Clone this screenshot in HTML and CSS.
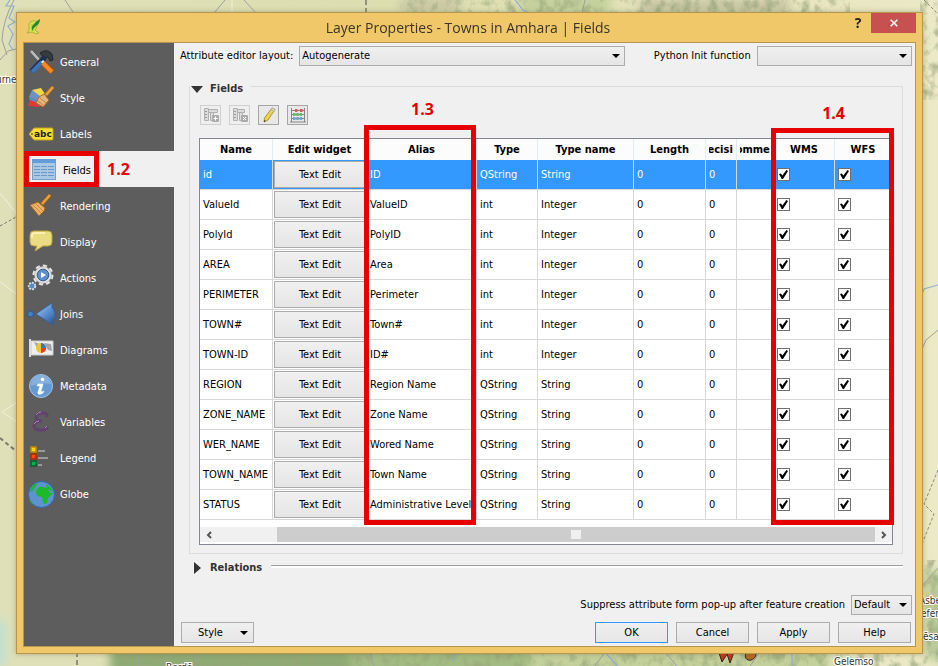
FILE: index.html
```html
<!DOCTYPE html>
<html lang="en">
<head>
<meta charset="utf-8">
<title>Layer Properties - Towns in Amhara | Fields</title>
<link rel="stylesheet" href="styles.css">
</head>
<body>
<svg class="map" viewBox="0 0 938 666" preserveAspectRatio="none" aria-hidden="true">
  <defs>
    <linearGradient id="land" x1="0" x2="1"><stop offset="0" stop-color="#dfe0b8"/><stop offset=".45" stop-color="#dcdeb0"/><stop offset="1" stop-color="#ebe9c6"/></linearGradient>
    <filter id="soft" x="-20%" y="-80%" width="140%" height="260%"><feGaussianBlur stdDeviation="5"/></filter>
    <filter id="relief" x="0" y="0" width="100%" height="100%"><feTurbulence type="fractalNoise" baseFrequency=".11 .08" numOctaves="4" seed="8"/><feColorMatrix values="0 0 0 0 .32  0 0 0 0 .38  0 0 0 0 .2  3 0 0 0 -1.35"/></filter>
    <clipPath id="hills"><path d="M400 0H850V13H400zM120 652H938V666H120zM920 0H938V100H920zM920 560H938V666H920z"/></clipPath>
  </defs>
  <rect width="938" height="666" fill="url(#land)"/>
  <g filter="url(#soft)">
    <path fill="#8faa74" d="M110 646h240v30H110zM380 646h90v30h-90z"/>
    <path fill="#a3bb83" d="M350 646h210v30H350z"/>
    <path fill="#c3d09b" d="M530 646h300v30H530zM520 -5h90v18h-90z"/>
    <path fill="#c4c2a0" d="M400 0h60v10h-60zM640 0h150v12H640z"/>
    <path fill="#b9cb98" d="M925 570h20v90h-20z"/>
    <path fill="#bfe0d0" d="M-8 620h14v46h-14z"/>
  </g>
  <g clip-path="url(#hills)"><rect width="938" height="666" filter="url(#relief)" opacity=".7"/></g>
  <g fill="none" stroke="#9ca0a0" stroke-width="1">
    <path d="M14 0Q3 20 2 40l5 15M0 60l8-9 8-2M65 0l8 12M214 13l11-13M244 0l12 13M585 0l-3 13M138 653v13M193 666l8-14M370 652l4 14M595 666l10-14M665 652l12 14M750 666l10-14M938 330l-12 10-6 14M938 568l-16 18"/>
  </g>
  <g fill="none" stroke="#91afd4" stroke-width="1.2">
    <path d="M10 0l-4 6h8l-5 12 6 4-7 4 5 8-4 10 4 6M515 0l8 10 6 3M458 652l-6 10M605 652l12 14M792 652v14M938 285l-14 4-4 10v24"/>
  </g>
  <path d="M0 226l16-9" fill="none" stroke="#757a62" stroke-dasharray="3 2"/>
  <path d="M0 438l16 13" stroke="#77796a" stroke-width="2" stroke-dasharray="4 3"/>
  <path d="M77 652v14M366 0v13" stroke="#77796a" stroke-width="1.5" stroke-dasharray="5 3"/>
  <path d="M924 0l14 14M938 470l-14 34 10 10-12 30" stroke="#88897a" fill="none" stroke-dasharray="3 2"/>
  <path d="M0 193l16 20M0 282l6 4 10 8M16 403l-14 9 14 9M232 0v13" stroke="#f2f0df" fill="none"/>
  <path d="M718 650l4 12 5-8 3 9 4-11z" fill="#c9361f" stroke="#31221c"/>
  <path d="M747 650c-4 8 0 11 4 10s6-5 5-10z" fill="#b76a21" stroke="#31221c"/>
  <g class="place">
    <text x="-4" y="83">urne</text>
    <text x="919" y="604">Asbe</text>
    <text x="921" y="617">efer</text>
    <text x="923" y="640">ēsa</text>
    <text x="834" y="665">Gelemso</text>
    <text x="166" y="671">Bordē</text>
  </g>
</svg>

<main class="dialog">
  <header class="titlebar">
    <svg class="app-icon" viewBox="0 0 14 16" aria-hidden="true"><path d="M3 3q5-3 7 1 1 4-2 7l4 3-3 1-4-2-5 1q3-3 2-6-1-3 1-5z" fill="#d3e34c" stroke="#9fa136" stroke-width=".7"/><path d="M5 5q-1 4 1 7M8 4q1 4-2 7" fill="none" stroke="#a2ad38" stroke-width=".6"/><path d="M13 0q0 5-4 7-3 2-4 5-1-5 2-7 2-3 6-5z" fill="#23882f"/></svg>
    <h1>Layer Properties - Towns in Amhara | Fields</h1>
    <button class="help-mark" type="button" aria-label="What's this">?</button>
    <button class="close" type="button" aria-label="Close"><svg viewBox="0 0 8 8"><path d="M.7.7l6.600 6.600M7.300.7L.7 7.300" stroke="#fff" stroke-width="1.600"/></svg></button>
  </header>

  <div class="body">
    <nav class="sidebar">
      <a href="#general"><svg viewBox="0 0 28 28"><path d="M3 2l9 10" stroke="#d4d7d9" stroke-width="2.200"/><path d="M3 2l9 10" stroke="#858a8f" stroke-width=".6"/><path d="M12 4q7-5 12 1l1 6-3 1-2-4-4 1z" fill="#363b3e" stroke="#20262a"/><path d="M17 8L3.500 22.500" stroke="#193254" stroke-width="5.500"/><path d="M14 13L4 23" stroke="#3c75b6" stroke-width="4"/><path d="M14 12l4 4" stroke="#e6e8ea" stroke-width="3"/><path d="M15 14l9 9" stroke="#b45208" stroke-width="6"/><path d="M15 14l9 9" stroke="#f58a23" stroke-width="4"/></svg>General</a>
      <a href="#style"><svg viewBox="0 0 28 28"><path d="M4 5l9-2 4 6-5 5z" fill="#f2d54b"/><path d="M4 5l-3 7 9 4 2-5z" fill="#6f93bd"/><path d="M1 12l9 4 2 5-9-1z" fill="#5d91ce"/><path d="M2 15l9 3 1 4-12-1z" fill="#e33935"/><path d="M25 2l-7 8" stroke="#a66219" stroke-width="4"/><path d="M25 2l-7 8" stroke="#e4a241" stroke-width="2.500"/><path d="M11 12l5-3 5 6-6 7-7-4z" fill="#e4b67c" stroke="#a86c2a"/><path d="M12 13l6 5M10 16l5 4" stroke="#bf8546"/></svg>Style</a>
      <a href="#labels"><svg viewBox="0 0 28 28"><path d="M6 7h18q1 0 1 1v10q0 1-1 1H6l-5-6z" fill="#f6df39" stroke="#c3a414"/><circle cx="4" cy="13" r="1" fill="#6c6422"/><text x="6" y="16" class="abc">abc</text></svg>Labels</a>
      <a href="#fields" class="current" aria-current="page"><svg viewBox="0 0 28 28"><rect x="1.500" y="2.500" width="23" height="20" fill="#a8c8e4" stroke="#7ba0c8"/><path d="M1 2h24v4H1z" fill="#649cdc"/><path d="M3 9.500h21M3 12.500h21M3 15.500h21M3 18.500h21" stroke="#6c98c4" stroke-dasharray="6 1"/></svg>Fields<span class="mark mark-nav"></span><b class="step step-nav">1.2</b></a>
      <a href="#rendering"><svg viewBox="0 0 28 28"><path d="M22 2l-8 9" stroke="#a05c11" stroke-width="4"/><path d="M22 2l-8 9" stroke="#eaa238" stroke-width="2.500"/><path d="M2 12l8-3 7 6-1 3-5 5z" fill="#edb267" stroke="#a76724"/><path d="M5 12l8 8M8 11l7 7" stroke="#bf7f36" stroke-width=".8"/></svg>Rendering</a>
      <a href="#display"><svg viewBox="0 0 28 28"><path d="M6 2h14q4 0 4 4v7q0 4-4 4h-5l-8 5 2-5H6q-4 0-4-4V6q0-4 4-4z" fill="#e9dc83" stroke="#bda63d"/><path d="M4 9V6q0-2 3-2h10" fill="none" stroke="#fff6c2" stroke-width="1.500"/></svg>Display</a>
      <a href="#actions"><svg viewBox="0 0 28 28"><circle cx="15" cy="10" r="9" fill="none" stroke="#e5e5e5" stroke-width="3" stroke-dasharray="4 3"/><circle cx="15" cy="10" r="8.500" fill="#dedede" stroke="#a6a6a6" stroke-width=".5"/><circle cx="15" cy="10" r="5.800" fill="#5c91cd" stroke="#355d8c"/><path d="M13 7l5 3-5 3z" fill="#fff"/><circle cx="4" cy="21" r="3.300" fill="#5a8cc3" stroke="#ddd" stroke-width="1.800" stroke-dasharray="2 1"/></svg>Actions</a>
      <a href="#joins"><svg viewBox="0 0 28 28"><defs><linearGradient id="blue" x2=".8" y2="1"><stop offset=".2" stop-color="#8fbaf0"/><stop offset=".55" stop-color="#5c90d2"/><stop offset="1" stop-color="#2c5b9c"/></linearGradient></defs><circle cx="2.500" cy="13" r="3" fill="#4a7fbd" stroke="#2c588d"/><path d="M8 13L24 2v5l2 1v3l1 1v5l-2 1v6z" fill="url(#blue)" stroke="#2f5f9d" stroke-width=".8"/></svg>Joins</a>
      <a href="#diagrams"><svg viewBox="0 0 28 28"><path d="M3 4h22v14H3z" fill="#eee" stroke="#ccc"/><path d="M6 5l6 2-3 4zM16 6l7 1 1 7-4-1z" fill="#a4a4a4"/><path d="M2 2v18" stroke="#ddd" stroke-width="2"/><circle cx="13" cy="11" r="5" fill="#ecc62d"/><path d="M13 11V6a5 5 0 0 1 5 5z" fill="#3b77b9"/><path d="M13 11h5a5 5 0 0 1-5 5z" fill="#e63b26"/></svg>Diagrams</a>
      <a href="#metadata"><svg viewBox="0 0 28 28"><circle cx="13" cy="13" r="11.500" fill="#659bd3" stroke="#a4c4e4"/><path d="M3 13a10 10 0 0 1 20-2q-9-2-20 2z" fill="#87b1dd"/><circle cx="14.500" cy="6.500" r="1.800" fill="#fff"/><path d="M10 11h5l-2 7q0 2 3 0l-1 2q-6 3-5-1l2-6h-3z" fill="#fff" stroke="#fff" stroke-width=".6"/></svg>Metadata</a>
      <a href="#variables"><svg viewBox="0 0 28 28"><path d="M19 8q1-4-4-4-7 0-7 4 0 4 6 4-8 0-8 5 0 4 7 4t6-4" fill="none" stroke="#64406f" stroke-width="3"/><path d="M8 6q2-3 5-3M6 15q2-3 5-3M17 19l2-2" fill="none" stroke="#a68caf"/></svg>Variables</a>
      <a href="#legend"><svg viewBox="0 0 28 28"><g stroke-width="1.500"><path d="M3 2h5v5H3z" fill="#ffd60a" stroke="#c58a00"/><path d="M3 9h5v5H3z" fill="#ff4b0a" stroke="#a92b00"/><path d="M3 16h5v5H3z" fill="#00b458" stroke="#00602a"/></g><path d="M10 6h7M10 13h10M10 20h4" stroke="#999" stroke-width="2"/></svg>Legend</a>
      <a href="#globe"><svg viewBox="0 0 28 28"><circle cx="13.500" cy="13.500" r="13" fill="#5e92d2" stroke="#2e68b5"/><path d="M9 8q2-3 6-2l4 1 3 5 3 0-5 5-1 5q-3 3-4-1l-1-5-5-1q-2-4 0-7zM17 3q6 2 8 8l-5-3zM2 10l3-6 5-2-2 3-4 6zM1 18l5 6-4-3z" fill="#1cba29"/></svg>Globe</a>
    </nav>

    <section class="page">
      <div class="options">
        <label for="layout">Attribute editor layout:</label>
        <span class="combo combo-layout"><select id="layout"><option>Autogenerate</option></select></span>
        <label for="init" class="init-label">Python Init function</label>
        <span class="combo combo-init"><select id="init"><option></option></select></span>
      </div>

      <section class="group">
        <h2 class="group-title"><i class="tri-down"></i>Fields</h2>
        <div class="tools">
          <button type="button" disabled aria-label="New column"><svg viewBox="0 0 18 18"><path d="M2.500 2.500h4v12h-4zM6.500 3.500h9v3h-9zM8.500 6.500h3v8h-3z" fill="#dcdcdc" stroke="#b0b0b0"/><path d="M3 5.500h2M3 8.500h2M3 11.500h2" stroke="#999"/><rect x="10" y="9" width="7" height="7" rx="1" fill="#ababab"/><path d="M13.500 10.500v4M11.500 12.500h4" stroke="#fff"/></svg></button>
          <button type="button" disabled aria-label="Delete column"><svg viewBox="0 0 18 18"><path d="M2.500 2.500h4v12h-4zM6.500 3.500h7v3h-7zM8.500 6.500h3v8h-3z" fill="#dcdcdc" stroke="#b0b0b0"/><path d="M3 5.500h2M3 8.500h2M3 11.500h2" stroke="#999"/><rect x="10" y="9" width="7" height="7" rx="1" fill="#ababab"/><path d="M12 11l3 3M15 11l-3 3" stroke="#fff"/></svg></button>
          <button type="button" aria-label="Toggle editing"><svg viewBox="0 0 18 18"><path d="M12 2l3 1.500-7 10.500-4 2 .5-4z" fill="#eed44a" stroke="#ac9638"/><path d="M12 2l3 1.500-1 2-3-2z" fill="#ddd" stroke="#999" stroke-width=".5"/><path d="M4 16l.2-2 1.500 1z" fill="#222"/></svg></button>
          <button type="button" aria-label="Field calculator"><svg viewBox="0 0 18 18"><path d="M2.500 2v14M15.500 2v14M2 4.500h14M2 8.500h14M2 12.500h14M1 16h16" fill="none" stroke="#858585"/><g fill="none" stroke-width="3" stroke-dasharray="2.500 .8"><path d="M6 4.500h3M11 4.500h3" stroke="#e05656"/><path d="M4 8.500h9" stroke="#6ab771"/><path d="M4 12.500h10" stroke="#75a4c8"/></g></svg></button>
        </div>

        <div class="grid-frame">
          <table>
            <colgroup><col class="c-name"><col class="c-widget"><col class="c-alias"><col class="c-type"><col class="c-tname"><col class="c-length"><col class="c-prec"><col class="c-comm"><col class="c-wms"><col></colgroup>
            <thead><tr><th><span>Name</span></th><th><span>Edit widget</span></th><th><span>Alias</span></th><th><span>Type</span></th><th><span>Type name</span></th><th><span>Length</span></th><th><span>Precision</span></th><th><span>Comment</span></th><th><span>WMS</span></th><th><span>WFS</span></th></tr></thead>
            <tbody>
              <tr class="selected"><td>id</td><td class="w"><button type="button">Text Edit</button></td><td>ID</td><td>QString</td><td>String</td><td>0</td><td>0</td><td></td><td><input type="checkbox" checked aria-label="id WMS"></td><td><input type="checkbox" checked aria-label="id WFS"></td></tr>
              <tr><td>ValueId</td><td class="w"><button type="button">Text Edit</button></td><td>ValueID</td><td>int</td><td>Integer</td><td>0</td><td>0</td><td></td><td><input type="checkbox" checked aria-label="ValueId WMS"></td><td><input type="checkbox" checked aria-label="ValueId WFS"></td></tr>
              <tr><td>PolyId</td><td class="w"><button type="button">Text Edit</button></td><td>PolyID</td><td>int</td><td>Integer</td><td>0</td><td>0</td><td></td><td><input type="checkbox" checked aria-label="PolyId WMS"></td><td><input type="checkbox" checked aria-label="PolyId WFS"></td></tr>
              <tr><td>AREA</td><td class="w"><button type="button">Text Edit</button></td><td>Area</td><td>int</td><td>Integer</td><td>0</td><td>0</td><td></td><td><input type="checkbox" checked aria-label="AREA WMS"></td><td><input type="checkbox" checked aria-label="AREA WFS"></td></tr>
              <tr><td>PERIMETER</td><td class="w"><button type="button">Text Edit</button></td><td>Perimeter</td><td>int</td><td>Integer</td><td>0</td><td>0</td><td></td><td><input type="checkbox" checked aria-label="PERIMETER WMS"></td><td><input type="checkbox" checked aria-label="PERIMETER WFS"></td></tr>
              <tr><td>TOWN#</td><td class="w"><button type="button">Text Edit</button></td><td>Town#</td><td>int</td><td>Integer</td><td>0</td><td>0</td><td></td><td><input type="checkbox" checked aria-label="TOWN# WMS"></td><td><input type="checkbox" checked aria-label="TOWN# WFS"></td></tr>
              <tr><td>TOWN-ID</td><td class="w"><button type="button">Text Edit</button></td><td>ID#</td><td>int</td><td>Integer</td><td>0</td><td>0</td><td></td><td><input type="checkbox" checked aria-label="TOWN-ID WMS"></td><td><input type="checkbox" checked aria-label="TOWN-ID WFS"></td></tr>
              <tr><td>REGION</td><td class="w"><button type="button">Text Edit</button></td><td>Region Name</td><td>QString</td><td>String</td><td>0</td><td>0</td><td></td><td><input type="checkbox" checked aria-label="REGION WMS"></td><td><input type="checkbox" checked aria-label="REGION WFS"></td></tr>
              <tr><td>ZONE_NAME</td><td class="w"><button type="button">Text Edit</button></td><td>Zone Name</td><td>QString</td><td>String</td><td>0</td><td>0</td><td></td><td><input type="checkbox" checked aria-label="ZONE_NAME WMS"></td><td><input type="checkbox" checked aria-label="ZONE_NAME WFS"></td></tr>
              <tr><td>WER_NAME</td><td class="w"><button type="button">Text Edit</button></td><td>Wored Name</td><td>QString</td><td>String</td><td>0</td><td>0</td><td></td><td><input type="checkbox" checked aria-label="WER_NAME WMS"></td><td><input type="checkbox" checked aria-label="WER_NAME WFS"></td></tr>
              <tr><td>TOWN_NAME</td><td class="w"><button type="button">Text Edit</button></td><td>Town Name</td><td>QString</td><td>String</td><td>0</td><td>0</td><td></td><td><input type="checkbox" checked aria-label="TOWN_NAME WMS"></td><td><input type="checkbox" checked aria-label="TOWN_NAME WFS"></td></tr>
              <tr><td>STATUS</td><td class="w"><button type="button">Text Edit</button></td><td>Administrative Level</td><td>QString</td><td>String</td><td>0</td><td>0</td><td></td><td><input type="checkbox" checked aria-label="STATUS WMS"></td><td><input type="checkbox" checked aria-label="STATUS WFS"></td></tr>
            </tbody>
          </table>
          <div class="scrollbar">
            <button type="button" aria-label="Scroll left"><svg viewBox="0 0 6 8"><path d="M5 1L2 4l3 3" fill="none" stroke="#555" stroke-width="2"/></svg></button>
            <div class="track"><div class="thumb"><i></i></div></div>
            <button type="button" aria-label="Scroll right"><svg viewBox="0 0 6 8"><path d="M1 1l3 3-3 3" fill="none" stroke="#555" stroke-width="2"/></svg></button>
          </div>
          <span class="mark mark-alias"></span><b class="step step-alias">1.3</b>
          <span class="mark mark-web"></span><b class="step step-web">1.4</b>
        </div>
      </section>

      <h2 class="relations"><i class="tri-right"></i>Relations</h2>

      <div class="suppress">
        <label for="suppress">Suppress attribute form pop-up after feature creation</label>
        <span class="combo combo-suppress"><select id="suppress"><option>Default</option></select></span>
      </div>
      <footer class="actions">
        <button type="button" class="style-menu">Style</button>
        <button type="button" class="primary">OK</button>
        <button type="button">Cancel</button>
        <button type="button">Apply</button>
        <button type="button">Help</button>
      </footer>
    </section>
  </div>
</main>
</body>
</html>
```
FILE: styles.css
```css
* { box-sizing: border-box; }

body {
  margin: 0;
  min-height: 100vh;
  display: flex;
  background: #dfe0b8;
  color: #000;
  font: 11px/14px "DejaVu Sans Condensed", "Noto Sans", sans-serif;
}

button, select, input { font: inherit; color: inherit; margin: 0; }

.map { position: fixed; inset: 0; width: 100%; height: 100%; z-index: -1; }
.place { font: 10px "DejaVu Sans Condensed", sans-serif; fill: #33332e; stroke: #fff; stroke-width: 2px; paint-order: stroke; }

/* Dialog frame */
.dialog {
  flex: 1;
  min-width: 0;
  margin: 12px 15px 12px 16px;
  padding: 0 6px 6px;
  border: 1px solid #b8954c;
  background: #f0c869;
  box-shadow: 0 0 5px rgba(90, 90, 50, .4);
  display: flex;
  flex-direction: column;
}
.titlebar { height: 29px; display: flex; align-items: flex-start; }
.titlebar h1 { flex: 1; margin: 0 0 0 8px; padding-left: 42px; text-align: center; font: 14px/29px "Open Sans", sans-serif; color: #3b3427; }
.app-icon { width: 14px; height: 16px; margin: 6px 0 0 4px; }
.help-mark { width: 26px; height: 20px; padding: 0; border: 0; background: none; font: bold 14px/20px "Open Sans", sans-serif; color: #222; }
.close { width: 45px; height: 20px; padding: 0; border: 0; background: #c75050; display: grid; place-items: center; }
.close svg { width: 8px; height: 8px; }
.body { flex: 1; display: flex; border: 1px solid #b8954c; background: #f0f0f0; }

/* Sidebar */
.sidebar { width: 150px; flex: none; background: #5d5d5d; }
.sidebar a { position: relative; height: 36px; padding: 3px 4px 0; display: flex; align-items: center; gap: 4px; color: #fff; text-decoration: none; }
.sidebar svg { width: 28px; height: 28px; overflow: visible; }
.sidebar .current { padding-left: 7px; background: #f0f0f0; color: #000; }
.abc { font: bold 9px "DejaVu Sans", sans-serif; fill: #222; }

/* Red call-outs */
.mark { position: absolute; border: 5px solid #e60000; pointer-events: none; }
.step { position: absolute; font: bold 16px/20px "Open Sans", sans-serif; color: #e60000; }
.mark-nav { left: 0; top: 0; width: 75px; height: 36px; }
.step-nav { left: 83px; top: 8px; }
.mark-alias { left: 164px; top: -14px; width: 112px; height: 400px; }
.step-alias { left: 211px; top: -40px; }
.mark-web { right: -2px; top: -11px; width: 123px; height: 397px; }
.step-web { right: 47px; top: -36px; }

/* Content */
.page { flex: 1; min-width: 0; padding: 3px 3px 3px 6px; display: flex; flex-direction: column; }
.options { display: flex; align-items: center; gap: 6px; }
.init-label { margin-left: 23px; }
.combo { position: relative; display: block; height: 20px; }
.combo select { appearance: none; width: 100%; height: 20px; padding: 0 2px; border: 1px solid #acacac; border-radius: 0; background: linear-gradient(#f0f0f0, #e5e5e5); }
.combo::after, .style-menu::after { content: ""; position: absolute; right: 5px; top: 8px; border: 4px solid transparent; border-top-color: #000; border-bottom: 0; pointer-events: none; }
.combo-layout { flex: 327; }
.combo-init { flex: 156; }
.combo-suppress { width: 61px; }

.group { margin: 20px 9px 0; border: 1px solid #dcdcdc; padding: 0 9px 8px; }
.group-title, .relations { margin: 0; font-size: 11px; line-height: 16px; color: #333; display: flex; align-items: center; }
.group-title { width: max-content; margin: -6px 0 0 -9px; padding: 0 7px 0 1px; gap: 7px; background: #f0f0f0; }
.tri-down { border: 6px solid transparent; border-top: 7px solid #333; border-bottom: 0; }
.tri-right { border: 6px solid transparent; border-left: 7px solid #333; border-right: 0; }
.relations { margin: 6px 9px 0; padding-left: 5px; gap: 9px; }
.relations::after { content: ""; flex: 1; height: 2px; margin-bottom: 4px; border-top: 1px solid #a0a0a0; background: #fff; }

.tools { display: flex; gap: 8px; margin: 8px 0 13px 1px; }
.tools button { width: 21px; height: 20px; padding: 0; border: 1px solid #a5a5a5; background: #e8e8e8; display: grid; place-items: center; }
.tools button:disabled { border-color: #cfcfcf; background: #efefef; }
.tools svg { width: 18px; height: 18px; }

/* Field table */
.grid-frame { position: relative; border: 1px solid #828790; background: #fff; padding-bottom: 2px; }
table { width: 100%; table-layout: fixed; border-collapse: separate; border-spacing: 0; }
.c-name { width: 73px; }
.c-widget { width: 94px; }
.c-alias { width: 110px; }
.c-type, .c-wms { width: 61px; }
.c-tname { width: 96px; }
.c-length { width: 72px; }
.c-prec { width: 31px; }
.c-comm { width: 37px; }
th { height: 21px; padding: 0 3px; border-right: 1px solid #e3ebf5; background: #fcfcfc; }
th span { display: flex; justify-content: center; overflow: hidden; white-space: nowrap; }
td { height: 30px; padding: 0 3px; border-right: 1px solid #d8d8d8; border-bottom: 1px solid #d8d8d8; white-space: nowrap; }
td.w { padding: 1px 0 1px 1px; }
td button { display: block; width: 100%; height: 27px; padding: 0; border: 1px solid #acacac; background: linear-gradient(#f0f0f0, #e5e5e5); color: #000; }
.selected td { background: #3399ff; color: #fff; }
td input { appearance: none; display: block; width: 13px; height: 13px; border: 1px solid #707070; background: #fff; }
td input:checked::before { content: ""; display: block; width: 9px; height: 9px; margin: 1px; background: #000; clip-path: polygon(0 45%, 20% 38%, 38% 62%, 82% 0, 100% 12%, 44% 100%, 30% 100%); }

.scrollbar { height: 15px; margin-top: 7px; display: flex; background: #f0f0f0; }
.scrollbar button { width: 17px; padding: 0; border: 0; background: none; display: grid; place-items: center; }
.scrollbar svg { width: 6px; height: 8px; }
.track { flex: 1; display: flex; padding-left: 60px; }
.thumb { flex: 1; background: #cdcdcd; display: grid; place-items: center; }
.thumb i { width: 10px; height: 9px; background: #f0f0f0; }

/* Bottom rows */
.suppress { margin-top: auto; display: flex; justify-content: flex-end; align-items: center; gap: 6px; }
.actions { margin: 7px 1px 0; display: flex; gap: 8px; }
.actions button { position: relative; width: 73px; height: 21px; padding: 0; border: 1px solid #acacac; background: linear-gradient(#f0f0f0, #e5e5e5); }
.actions .style-menu { margin-right: auto; padding-right: 14px; }
.actions .primary { border-color: #3399ff; }
```
